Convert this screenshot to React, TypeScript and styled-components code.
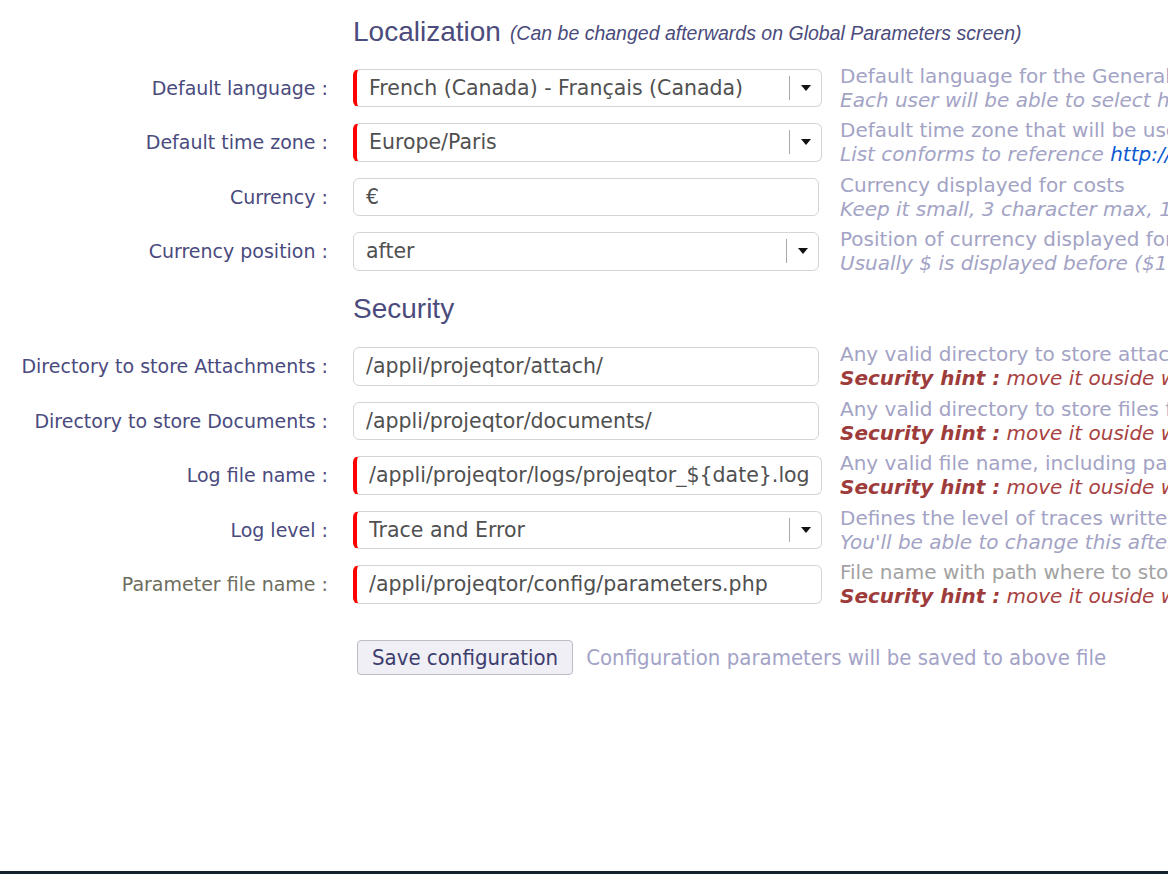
import styled, { createGlobalStyle } from 'styled-components';

const GlobalStyle = createGlobalStyle`
  html, body {
    margin: 0;
    padding: 0;
    background: #ffffff;
  }
  body {
    font-family: "DejaVu Sans", Verdana, sans-serif;
  }
`;

type Hint = { text: string; link?: string };

type Param = {
  label: string;
  value: string;
  required?: boolean;
  select?: boolean;
  muted?: boolean;
  desc: string;
  hint?: Hint;
  security?: string;
};

const localization: Param[] = [
  {
    label: 'Default language',
    value: 'French (Canada) - Français (Canada)',
    required: true,
    select: true,
    desc: 'Default language for the General Parameters',
    hint: { text: 'Each user will be able to select his own language' },
  },
  {
    label: 'Default time zone',
    value: 'Europe/Paris',
    required: true,
    select: true,
    desc: 'Default time zone that will be used for dates',
    hint: { text: 'List conforms to reference ', link: 'http://php.net/manual/en/timezones.php' },
  },
  {
    label: 'Currency',
    value: '€',
    desc: 'Currency displayed for costs',
    hint: { text: 'Keep it small, 3 character max, 1 is best' },
  },
  {
    label: 'Currency position',
    value: 'after',
    select: true,
    desc: 'Position of currency displayed for costs',
    hint: { text: 'Usually $ is displayed before ($1000) and € after (1000€)' },
  },
];

const security: Param[] = [
  {
    label: 'Directory to store Attachments',
    value: '/appli/projeqtor/attach/',
    desc: 'Any valid directory to store attachments',
    security: 'move it ouside web reach',
  },
  {
    label: 'Directory to store Documents',
    value: '/appli/projeqtor/documents/',
    desc: 'Any valid directory to store files for documents',
    security: 'move it ouside web reach',
  },
  {
    label: 'Log file name',
    value: '/appli/projeqtor/logs/projeqtor_${date}.log',
    required: true,
    desc: 'Any valid file name, including path',
    security: 'move it ouside web reach',
  },
  {
    label: 'Log level',
    value: 'Trace and Error',
    required: true,
    select: true,
    desc: 'Defines the level of traces written in log file',
    hint: { text: "You'll be able to change this afterwards in parameters" },
  },
  {
    label: 'Parameter file name',
    value: '/appli/projeqtor/config/parameters.php',
    required: true,
    muted: true,
    desc: 'File name with path where to store parameters',
    security: 'move it ouside web reach',
  },
];

function ParamRow({ p }: { p: Param }) {
  return (
    <Row>
      <Label $muted={p.muted}>{p.label} :</Label>
      <FieldCell>
        <Field $required={p.required}>
          <Value>{p.value}</Value>
          {p.select && (
            <ArrowBox>
              <Arrow />
            </ArrowBox>
          )}
        </Field>
      </FieldCell>
      <Desc>
        <DescMain $muted={p.muted}>{p.desc}</DescMain>
        {p.hint && (
          <DescHint>
            {p.hint.text}
            {p.hint.link && <HintLink>{p.hint.link}</HintLink>}
          </DescHint>
        )}
        {p.security && (
          <SecurityHint>
            <strong>Security hint :</strong> {p.security}
          </SecurityHint>
        )}
      </Desc>
    </Row>
  );
}

export default function App() {
  return (
    <Page>
      <GlobalStyle />
      <Content>
        <SectionTitle $offset={3}>
          Localization
          <SubTitle>(Can be changed afterwards on Global Parameters screen)</SubTitle>
        </SectionTitle>
        {localization.map((p) => (
          <ParamRow key={p.label} p={p} />
        ))}
        <SectionTitle>Security</SectionTitle>
        {security.map((p) => (
          <ParamRow key={p.label} p={p} />
        ))}
        <ButtonRow>
          <SaveButton type="button">Save configuration</SaveButton>
          <ButtonNote>Configuration parameters will be saved to above file</ButtonNote>
        </ButtonRow>
      </Content>
      <BottomBar />
    </Page>
  );
}

const Page = styled.div`
  height: 100vh;
  display: flex;
  flex-direction: column;
  overflow: hidden;
`;

const Content = styled.div`
  flex: 1;
`;

const SectionTitle = styled.div<{ $offset?: number }>`
  box-sizing: border-box;
  height: 60.5px;
  display: flex;
  align-items: center;
  padding-left: 353px;
  padding-top: ${(p) => p.$offset ?? 0}px;
  font-family: "Liberation Sans", Arial, sans-serif;
  font-size: 28px;
  color: #4b4b7c;
  white-space: nowrap;
`;

const SubTitle = styled.span`
  font-size: 19.5px;
  font-style: italic;
  margin-left: 9px;
  margin-top: 3px;
`;

const Row = styled.div`
  height: 54.5px;
  display: flex;
  align-items: center;
  white-space: nowrap;
`;

const Label = styled.div<{ $muted?: boolean }>`
  width: 328px;
  padding-right: 25px;
  flex-shrink: 0;
  text-align: right;
  font-size: 19px;
  color: ${(p) => (p.$muted ? '#6d6d5e' : '#4a4a7e')};
`;

const FieldCell = styled.div`
  width: 469px;
  flex-shrink: 0;
`;

const Field = styled.div<{ $required?: boolean }>`
  box-sizing: border-box;
  width: ${(p) => (p.$required ? 469 : 466)}px;
  height: 38.5px;
  display: flex;
  align-items: center;
  background: #ffffff;
  border: 1px solid #d4d4d4;
  border-left: ${(p) => (p.$required ? '4px solid #ff0000' : '1px solid #d4d4d4')};
  border-radius: 6px;
  padding-left: 12px;
`;

const Value = styled.span`
  flex: 1;
  font-size: 20.5px;
  color: #505050;
  overflow: hidden;
`;

const ArrowBox = styled.span`
  width: 31px;
  height: 24px;
  flex-shrink: 0;
  display: flex;
  align-items: center;
  justify-content: center;
  border-left: 1px solid #a8a8a8;
`;

const Arrow = styled.span`
  width: 0;
  height: 0;
  border-left: 5px solid transparent;
  border-right: 5px solid transparent;
  border-top: 6px solid #111111;
`;

const Desc = styled.div`
  margin-left: 18px;
  display: flex;
  flex-direction: column;
  font-size: 20px;
  line-height: 24px;
  white-space: nowrap;
`;

const DescMain = styled.span<{ $muted?: boolean }>`
  color: ${(p) => (p.$muted ? '#a2a2a2' : '#a3a3c5')};
`;

const DescHint = styled.span`
  color: #a3a3c5;
  font-style: italic;
`;

const HintLink = styled.span`
  color: #0a5ad2;
`;

const SecurityHint = styled.span`
  color: #a84242;
  font-style: italic;

  strong {
    color: #9e3c3c;
    font-weight: bold;
  }
`;

const ButtonRow = styled.div`
  display: flex;
  align-items: center;
  padding: 28px 0 0 357px;
  white-space: nowrap;
`;

const SaveButton = styled.button`
  height: 35px;
  padding: 0 14px;
  background: #f0eff6;
  border: 1px solid #bdbdc6;
  border-radius: 4px;
  font-family: "DejaVu Sans Condensed", "DejaVu Sans", sans-serif;
  font-stretch: condensed;
  font-size: 22px;
  color: #3e3e6e;
`;

const ButtonNote = styled.span`
  margin-left: 13px;
  font-family: "DejaVu Sans Condensed", "DejaVu Sans", sans-serif;
  font-stretch: condensed;
  font-size: 22px;
  color: #a3a3c8;
`;

const BottomBar = styled.div`
  height: 3px;
  flex-shrink: 0;
  background: #13232f;
`;
